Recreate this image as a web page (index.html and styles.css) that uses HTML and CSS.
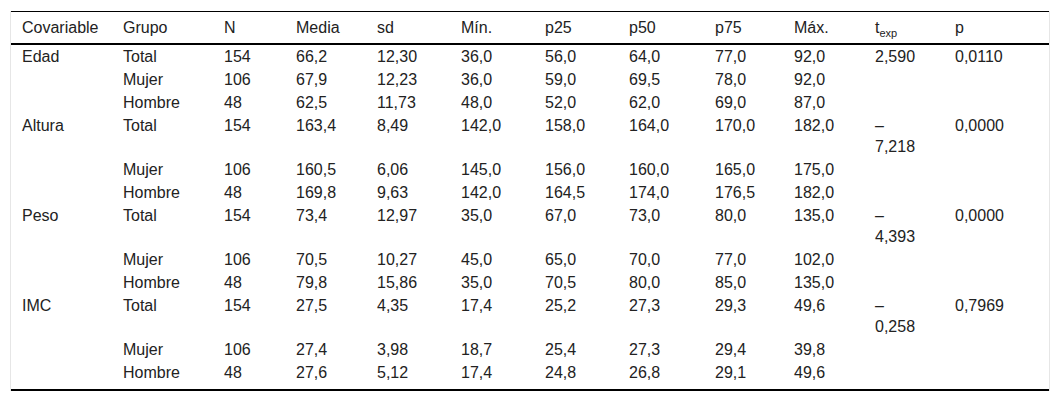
FILE: index.html
```html
<!DOCTYPE html>
<html lang="es">
<head>
<meta charset="utf-8">
<title>Tabla</title>
<link rel="stylesheet" href="styles.css">
</head>
<body>
<div class="wrap">
<table class="stats">
<colgroup>
<col class="c1"><col class="c2"><col class="c3"><col class="c4"><col class="c5"><col class="c6"><col class="c7"><col class="c8"><col class="c9"><col class="c10"><col class="c11"><col class="c12">
</colgroup>
<thead>
<tr><th>Covariable</th><th>Grupo</th><th>N</th><th>Media</th><th>sd</th><th>Mín.</th><th>p25</th><th>p50</th><th>p75</th><th>Máx.</th><th>t<sub>exp</sub></th><th>p</th></tr>
</thead>
<tbody>
<tr><td>Edad</td><td>Total</td><td>154</td><td>66,2</td><td>12,30</td><td>36,0</td><td>56,0</td><td>64,0</td><td>77,0</td><td>92,0</td><td>2,590</td><td>0,0110</td></tr>
<tr><td></td><td>Mujer</td><td>106</td><td>67,9</td><td>12,23</td><td>36,0</td><td>59,0</td><td>69,5</td><td>78,0</td><td>92,0</td><td></td><td></td></tr>
<tr><td></td><td>Hombre</td><td>48</td><td>62,5</td><td>11,73</td><td>48,0</td><td>52,0</td><td>62,0</td><td>69,0</td><td>87,0</td><td></td><td></td></tr>
<tr><td>Altura</td><td>Total</td><td>154</td><td>163,4</td><td>8,49</td><td>142,0</td><td>158,0</td><td>164,0</td><td>170,0</td><td>182,0</td><td>–<br>7,218</td><td>0,0000</td></tr>
<tr><td></td><td>Mujer</td><td>106</td><td>160,5</td><td>6,06</td><td>145,0</td><td>156,0</td><td>160,0</td><td>165,0</td><td>175,0</td><td></td><td></td></tr>
<tr><td></td><td>Hombre</td><td>48</td><td>169,8</td><td>9,63</td><td>142,0</td><td>164,5</td><td>174,0</td><td>176,5</td><td>182,0</td><td></td><td></td></tr>
<tr><td>Peso</td><td>Total</td><td>154</td><td>73,4</td><td>12,97</td><td>35,0</td><td>67,0</td><td>73,0</td><td>80,0</td><td>135,0</td><td>–<br>4,393</td><td>0,0000</td></tr>
<tr><td></td><td>Mujer</td><td>106</td><td>70,5</td><td>10,27</td><td>45,0</td><td>65,0</td><td>70,0</td><td>77,0</td><td>102,0</td><td></td><td></td></tr>
<tr><td></td><td>Hombre</td><td>48</td><td>79,8</td><td>15,86</td><td>35,0</td><td>70,5</td><td>80,0</td><td>85,0</td><td>135,0</td><td></td><td></td></tr>
<tr><td>IMC</td><td>Total</td><td>154</td><td>27,5</td><td>4,35</td><td>17,4</td><td>25,2</td><td>27,3</td><td>29,3</td><td>49,6</td><td>–<br>0,258</td><td>0,7969</td></tr>
<tr><td></td><td>Mujer</td><td>106</td><td>27,4</td><td>3,98</td><td>18,7</td><td>25,4</td><td>27,3</td><td>29,4</td><td>39,8</td><td></td><td></td></tr>
<tr class="last"><td></td><td>Hombre</td><td>48</td><td>27,6</td><td>5,12</td><td>17,4</td><td>24,8</td><td>26,8</td><td>29,1</td><td>49,6</td><td></td><td></td></tr>
</tbody>
</table>
</div>
</body>
</html>
```
FILE: styles.css
```css
html, body {
  margin: 0;
  padding: 0;
  background: #fff;
}
body {
  font-family: "Liberation Sans", Arial, sans-serif;
  font-size: 16px;
  color: #222;
}
.wrap {
  margin: 11px 0 0 10px;
  width: 1038px;
  border-left: 1px solid #e6e6e6;
  border-right: 1px solid #e6e6e6;
}
.stats {
  width: 100%;
  border-collapse: collapse;
  table-layout: fixed;
  border-top: 1px solid #000;
  border-bottom: 2px solid #000;
}
.c1 { width: 101px; }
.c2 { width: 101px; }
.c3 { width: 72px; }
.c4 { width: 81px; }
.c5 { width: 84px; }
.c6 { width: 84px; }
.c7 { width: 84px; }
.c8 { width: 86px; }
.c9 { width: 79px; }
.c10 { width: 81px; }
.c11 { width: 80px; }
.c12 { width: auto; }
.stats th, .stats td {
  text-align: left;
  vertical-align: top;
  font-weight: normal;
  line-height: 21px;
  padding: 1px 0 1px 11px;
}
.stats th {
  padding-top: 5px;
  padding-bottom: 5px;
  border-bottom: 2px solid #000;
}
.stats sub {
  font-size: 11px;
  line-height: 0;
  vertical-align: -4px;
}
.stats tr.last td {
  padding-bottom: 6px;
}
```
